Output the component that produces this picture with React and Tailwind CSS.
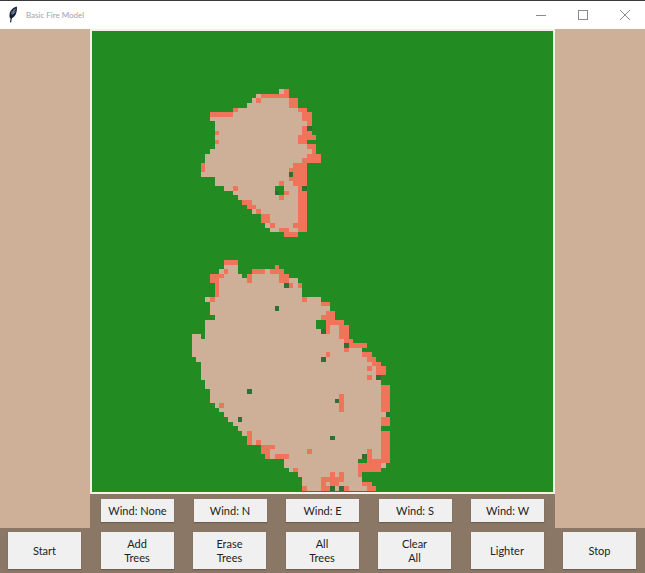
const SAND = "#cdb097";
const GREEN = "#228b22";

function parseRange(text) {
  const cells = [];
  if (!text) return cells;
  for (const part of text.split(",")) {
    const [a, b] = part.split("-").map(Number);
    for (let c = a; c <= (b === undefined ? a : b); c++) cells.push(c);
  }
  return cells;
}

// row, first tan col, last tan col, salmon cells, dark cells, green holes
const ROWS = [
  [13,41,42,"42"],[14,36,42,"37-42"],[15,35,44,"36,43-44"],[16,34,44,"43-44"],
  [17,31,46,"31,45-46"],[18,26,47,"26-30,46-47"],[19,26,47,"46-47"],[20,27,47,"47"],
  [21,27,47,"46","47"],[22,27,47,"27,46-47"],[23,27,48,"45-48"],[24,27,46,"27,45-46"],
  [25,27,48,"47-48"],[26,26,48,"48"],[27,25,49,"47-49"],[28,25,49,"46-49"],
  [29,24,46,"24,44-46"],[30,24,46,"24,43-46"],[31,24,46,"44-46","43"],[32,27,46,"43-46"],
  [33,27,46,"41,44-46"],[34,29,46,"31,45","46","40-41"],[35,31,46,"42,45-46","40","41"],
  [36,32,46,"41,45-46"],[37,33,46,"33-34,45-46"],[38,34,46,"34-35,45-46"],[39,35,46,"36,45-46"],
  [40,37,46,"37-38,45-46"],[41,37,46,"37-38,45-46"],[42,38,46,"39,44-46"],
  [43,39,46,"41-42,45-46"],[44,42,44,"42-44"],

  [50,29,31,"29-31"],[51,29,31,""],[51,40,40,"40"],[52,28,31,"29"],[52,35,41,"35-37,39-41"],
  [53,26,32,"26-28"],[53,34,42,"34,41-42"],[54,26,44,"26-27,34,41-42"],[55,27,45,"27,43,45","42"],
  [56,27,45,"27"],[57,27,45,"27"],[58,25,49,"26,46"],[59,26,51,"50-51"],[60,26,51,"","40"],
  [61,26,52,"51-52"],[62,27,52,"50-52"],[63,25,54,"51-54","","49-50"],[64,25,55,"51,54-55","","49-50"],
  [65,25,55,"51,54-55","50"],[66,25,55,"54-55"],[66,22,23,""],[67,22,56,"55-56"],[68,22,59,"56-59","55"],
  [69,22,58,"55"],[70,22,60,"51,59-60"],[71,23,61,"60-61","50"],[72,24,62,"61-62"],[73,24,63,"60,62-63"],
  [74,24,63,"62-63"],[75,24,62,"60","62"],[76,25,62,""],[77,25,64,"63-64"],[78,26,64,"63-64","34"],
  [79,26,64,"54,63-64"],[80,26,64,"54,63-64","53"],[81,27,64,"28,54,63-64"],[82,28,64,"54,63-64"],
  [83,29,64,"","64"],[84,30,64,"63-64","32"],[85,31,64,"63-64"],[86,32,62,""],[87,33,64,"34,63-64"],
  [88,34,64,"34,63-64","52"],[89,34,64,"34,36,63-64"],[90,37,64,"37-39,63-64"],[91,37,64,"37-38,47,60,63-64"],
  [92,38,64,"38,40-42,60,63-64","59"],[93,42,64,"60-64","","58-59"],[94,42,63,"58-62"],[95,43,62,"44,58-62"],
  [96,45,58,"52,54,58"],[97,46,58,"50-54"],[98,46,60,"50,52-53,59-60"],[99,46,61,"46,50-51,55,60-61","52,54"],
];

function buildPaths() {
  const grid = new Map();
  for (const [r, a, b, s, d, g] of ROWS) {
    for (let c = a; c <= b; c++) grid.set(`${r}:${c}`, "t");
    for (const c of parseRange(s)) grid.set(`${r}:${c}`, "s");
    for (const c of parseRange(d)) grid.set(`${r}:${c}`, "d");
    for (const c of parseRange(g)) grid.set(`${r}:${c}`, "g");
  }
  const out = { t: "", s: "", d: "", g: "" };
  for (const [key, v] of grid) {
    const [r, c] = key.split(":");
    out[v] += `M${c} ${r}h1v1h-1z`;
  }
  return out;
}

const paths = buildPaths();

function Feather() {
  return (
    <svg width="12" height="18" viewBox="0 0 12 18" className="ml-[7px] shrink-0">
      <path d="M9.8 0.6C6.2 1.6 3.2 4.4 2.6 8C2.3 9.8 2.5 11.2 3.2 12.6C6.4 12 8.6 9.4 9.4 6.4C10 4.4 10.1 2.4 9.8 0.6Z" fill="#16202e" />
      <path d="M8.6 2.6L5 9M7.2 3L6 6.4M5.4 5L4.5 8M8.6 5.6L5.6 8.2" stroke="#7f97b8" strokeWidth="0.8" fill="none" />
      <path d="M5.2 8.6L4 13.5L3.6 16.4" stroke="#16202e" strokeWidth="1.2" fill="none" />
    </svg>
  );
}

function Btn({ h, children }) {
  return (
    <button className={`${h} w-[73px] shrink-0 bg-[#f0f0f0] text-[11px] leading-[14px] pt-[1px] text-[#222222] text-center shadow-[0_1px_1px_rgba(60,50,40,0.35)]`}>
      {children}
    </button>
  );
}

export default function App() {
  return (
    <div className="w-[645px] h-[573px] overflow-hidden bg-[#8a7766] font-['Lato',sans-serif]">
      <header className="h-[29px] bg-white border-t-[1px] border-[#3a3a3a] flex items-center">
        <Feather />
        <span className="ml-[7px] text-[8px] text-[#a2a2a2]">Basic Fire Model</span>
        <div className="ml-auto flex items-center text-[#7c7c7c]">
          <svg width="12" height="12" viewBox="0 0 12 12" className="mr-[30px]"><path d="M1 6.5H11" stroke="#8a8a8a" strokeWidth="1" /></svg>
          <svg width="12" height="12" viewBox="0 0 12 12" className="mr-[30px]"><rect x="1.5" y="1.5" width="9" height="9" fill="none" stroke="#8a8a8a" strokeWidth="1" /></svg>
          <svg width="12" height="12" viewBox="0 0 12 12" className="mr-[14px]"><path d="M1 1L11 11M11 1L1 11" stroke="#8a8a8a" strokeWidth="1" /></svg>
        </div>
      </header>

      <div className="flex h-[499px]">
        <div className="w-[90px] h-full bg-[#cdb097]" />
        <div className="w-[465px] h-full flex flex-col">
          <div className="h-[465px] border-2 border-[#f6f1e6] bg-[#228b22]">
            <svg viewBox="0.45 0.43 99.8 99.8" className="block w-[461px] h-[461px]" shapeRendering="crispEdges">
              <path d={paths.t} fill={SAND} />
              <path d={paths.s} fill="#ef7459" />
              <path d={paths.d} fill="#2f6f35" />
              <path d={paths.g} fill={GREEN} />
            </svg>
          </div>
          <div className="flex gap-[19.5px] pl-[11px] pt-[5px]">
            <Btn h="h-[23px]">Wind: None</Btn>
            <Btn h="h-[23px]">Wind: N</Btn>
            <Btn h="h-[23px]">Wind: E</Btn>
            <Btn h="h-[23px]">Wind: S</Btn>
            <Btn h="h-[23px]">Wind: W</Btn>
          </div>
        </div>
        <div className="flex-1 h-full bg-[#cdb097]" />
      </div>

      <div className="flex gap-[19.5px] pl-[8px] pt-[4px]">
        <Btn h="h-[37px]">Start</Btn>
        <Btn h="h-[37px]">Add<br />Trees</Btn>
        <Btn h="h-[37px]">Erase<br />Trees</Btn>
        <Btn h="h-[37px]">All<br />Trees</Btn>
        <Btn h="h-[37px]">Clear<br />All</Btn>
        <Btn h="h-[37px]">Lighter</Btn>
        <Btn h="h-[37px]">Stop</Btn>
      </div>
    </div>
  );
}
